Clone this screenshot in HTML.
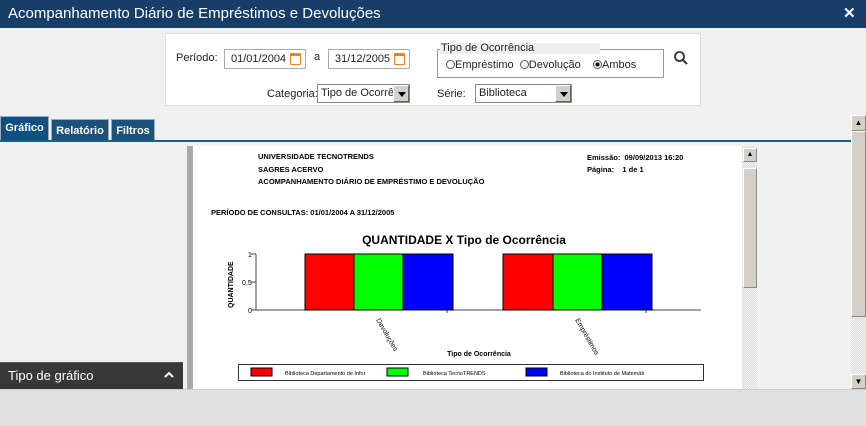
<!DOCTYPE html>
<html><head><meta charset="utf-8"><style>
*{margin:0;padding:0;box-sizing:border-box}
body{width:866px;height:426px;position:relative;background:#f0f0f0;font-family:"Liberation Sans",sans-serif;overflow:hidden}
.a{position:absolute;white-space:nowrap}
.t{font-size:11px;color:#222}
.inp{position:absolute;background:#fff;border:1px solid #aaa;height:20px;font-size:11px;padding:3px 6px;color:#222;white-space:nowrap}
.cal{position:absolute;right:4px;top:3px;width:11px;height:12px;border:1.5px solid #f08020;border-top-width:3px;border-radius:1px}
.sel{position:absolute;background:#fff;border:1px solid #888;height:19px;font-size:11px;padding:2px 3px;color:#222;white-space:nowrap;overflow:hidden}
.arr{position:absolute;right:0;top:0;width:16px;height:17px;background:#d4d0c8;border:1px solid #666;border-top-color:#fff;border-left-color:#fff}
.arr:after{content:"";position:absolute;left:4px;top:6px;border:4px solid transparent;border-top:5px solid #000;border-bottom:0}
.tab{position:absolute;top:119px;height:22px;background:#1c5279;color:#fff;font-size:11px;font-weight:bold;padding:5px 0 0;text-align:center;border:1px solid #9ab;white-space:nowrap}
.b{font-weight:bold;font-size:7.5px;color:#000;position:absolute;white-space:nowrap}
.sb{position:absolute;background:#d4d0c8;border:1px solid #888;border-top-color:#fff;border-left-color:#fff}
.radio{display:inline-block;width:9px;height:9px;border-radius:50%;border:1px solid #555;vertical-align:-1px;background:#fff}
</style></head><body>
<div class="a" style="left:0;top:0;width:866px;height:28px;background:#163e69"></div>
<div class="a" style="left:8px;top:5px;color:#fff;font-size:15px">Acompanhamento Diário de Empréstimos e Devoluções</div>
<div class="a" style="left:843px;top:4px;color:#fff;font-size:15px;font-weight:bold">✕</div>

<div class="a" style="left:165px;top:33px;width:536px;height:73px;background:#fff;border:1px solid #ddd"></div>
<div class="a t" style="left:176px;top:52px">Período:</div>
<div class="inp" style="left:224px;top:49px;width:82px">01/01/2004<span class="cal"></span></div>
<div class="a t" style="left:314px;top:51px">a</div>
<div class="inp" style="left:328px;top:49px;width:82px">31/12/2005<span class="cal"></span></div>
<div class="a" style="left:437px;top:49px;width:227px;height:29px;border:1px solid #999;border-top:none"></div>
<div class="a" style="left:437px;top:49px;width:3px;border-top:1px solid #999"></div>
<div class="a" style="left:599px;top:49px;width:65px;border-top:1px solid #999"></div>
<div class="a" style="left:440px;top:43px;width:160px;height:11px;background:#eee"></div>
<div class="a" style="left:441px;top:42px;font-size:11px;color:#222">Tipo de Ocorrência</div>
<div class="a" style="left:446px;top:59px;font-size:11px;color:#222"><span class="radio"></span>Empréstimo &nbsp;<span class="radio"></span>Devolução &nbsp;&nbsp;&nbsp;<span class="radio" style="background:radial-gradient(#000 40%,#fff 45%)"></span>Ambos</div>
<svg class="a" style="left:673px;top:50px" width="16" height="16"><circle cx="6.5" cy="6.5" r="4.5" fill="none" stroke="#333" stroke-width="1.8"/><path d="M10 10 L14 14" stroke="#333" stroke-width="2"/></svg>
<div class="a t" style="left:267px;top:88px">Categoria:</div>
<div class="sel" style="left:317px;top:84px;width:93px">Tipo de Ocorrência<span class="arr"></span></div>
<div class="a t" style="left:437px;top:88px">Série:</div>
<div class="sel" style="left:475px;top:84px;width:97px">Biblioteca<span class="arr"></span></div>

<div class="tab" style="left:0;top:116px;width:49px;height:25px;background:#0d5081">Gráfico</div>
<div class="tab" style="left:51px;width:58px">Relatório</div>
<div class="tab" style="left:111px;width:44px">Filtros</div>
<div class="a" style="left:0;top:140px;width:851px;height:2px;background:#1a5f8e"></div>

<div class="sb" style="left:851px;top:115px;width:15px;height:16px;font-size:8px;text-align:center;line-height:13px">▲</div>
<div class="sb" style="left:851px;top:131px;width:15px;height:186px"></div>
<div class="a" style="left:851px;top:317px;width:15px;height:58px;background:repeating-conic-gradient(#ddd 0 25%,#f0f0f0 0 50%) 0 0/2px 2px"></div>
<div class="sb" style="left:851px;top:374px;width:15px;height:15px;font-size:8px;text-align:center;line-height:13px">▼</div>

<div class="a" style="left:187px;top:146px;width:6px;height:243px;background:#aaa"></div>
<div class="a" style="left:193px;top:146px;width:549px;height:243px;background:#fff"></div>
<div class="a" style="left:742px;top:146px;width:15px;height:243px;background:repeating-conic-gradient(#ddd 0 25%,#f0f0f0 0 50%) 0 0/2px 2px"></div>
<div class="sb" style="left:743px;top:148px;width:14px;height:14px;font-size:7px;text-align:center;line-height:12px">▲</div>
<div class="sb" style="left:743px;top:168px;width:14px;height:120px"></div>

<div class="b" style="left:258px;top:152px">UNIVERSIDADE TECNOTRENDS</div>
<div class="b" style="left:258px;top:165px">SAGRES ACERVO</div>
<div class="b" style="left:258px;top:177px">ACOMPANHAMENTO DIÁRIO DE EMPRÉSTIMO E DEVOLUÇÃO</div>
<div class="b" style="left:587px;top:153px">Emissão:&nbsp; 09/09/2013 16:20</div>
<div class="b" style="left:587px;top:165px">Página:&nbsp;&nbsp;&nbsp; 1 de 1</div>
<div class="b" style="left:211px;top:208px">PERÍODO DE CONSULTAS: 01/01/2004 A 31/12/2005</div>

<svg class="a" style="left:193px;top:146px" width="549" height="243" font-family="Liberation Sans,sans-serif">
<text x="271" y="98" font-size="12" font-weight="bold" text-anchor="middle">QUANTIDADE X Tipo de Ocorrência</text>
<text x="40" y="162" font-size="7" font-weight="bold" transform="rotate(-90 40 162)">QUANTIDADE</text>
<g font-size="7"><text x="55" y="111">1</text><text x="49" y="139">0,5</text><text x="55" y="167">0</text></g>
<path d="M63 108V164M58 108H63M58 136H63M58 164H508M254 164v3M453 164v3" stroke="#444" fill="none"/>
<g stroke="#000" stroke-width="1">
<rect x="112" y="108" width="49" height="56" fill="#f00"/><rect x="161" y="108" width="49" height="56" fill="#0f0"/><rect x="210" y="108" width="50" height="56" fill="#00f"/>
<rect x="310" y="108" width="50" height="56" fill="#f00"/><rect x="360" y="108" width="49" height="56" fill="#0f0"/><rect x="409" y="108" width="50" height="56" fill="#00f"/>
</g>
<text x="183" y="174" font-size="7" transform="rotate(60 183 174)">Devoluções</text>
<text x="382" y="174" font-size="7" transform="rotate(60 382 174)">Empréstimos</text>
<text x="286" y="210" font-size="7" font-weight="bold" text-anchor="middle">Tipo de Ocorrência</text>
<rect x="45.5" y="218.5" width="465" height="16" fill="#fff" stroke="#333"/>
<rect x="58" y="222" width="21" height="8" fill="#f00" stroke="#000"/>
<rect x="194" y="222" width="21" height="8" fill="#0f0" stroke="#000"/>
<rect x="333" y="222" width="21" height="8" fill="#00f" stroke="#000"/>
<g font-size="5.5"><text x="92" y="229">Biblioteca Departamento de Infor</text><text x="230" y="229">Biblioteca TecnoTRENDS</text><text x="367" y="229">Biblioteca do Instituto de Matemáti</text></g>
</svg>

<div class="a" style="left:0;top:362px;width:183px;height:27px;background:#383838;border-top:1px solid #555"></div>
<div class="a" style="left:8px;top:368px;color:#fff;font-size:13px">Tipo de gráfico</div>
<svg class="a" style="left:164px;top:371px" width="10" height="8"><path d="M1 6L5 2L9 6" stroke="#fff" stroke-width="2" fill="none"/></svg>
<div class="a" style="left:0;top:389px;width:866px;height:37px;background:#e0e0e0;border-top:1px solid #ccc"></div>
</body></html>
